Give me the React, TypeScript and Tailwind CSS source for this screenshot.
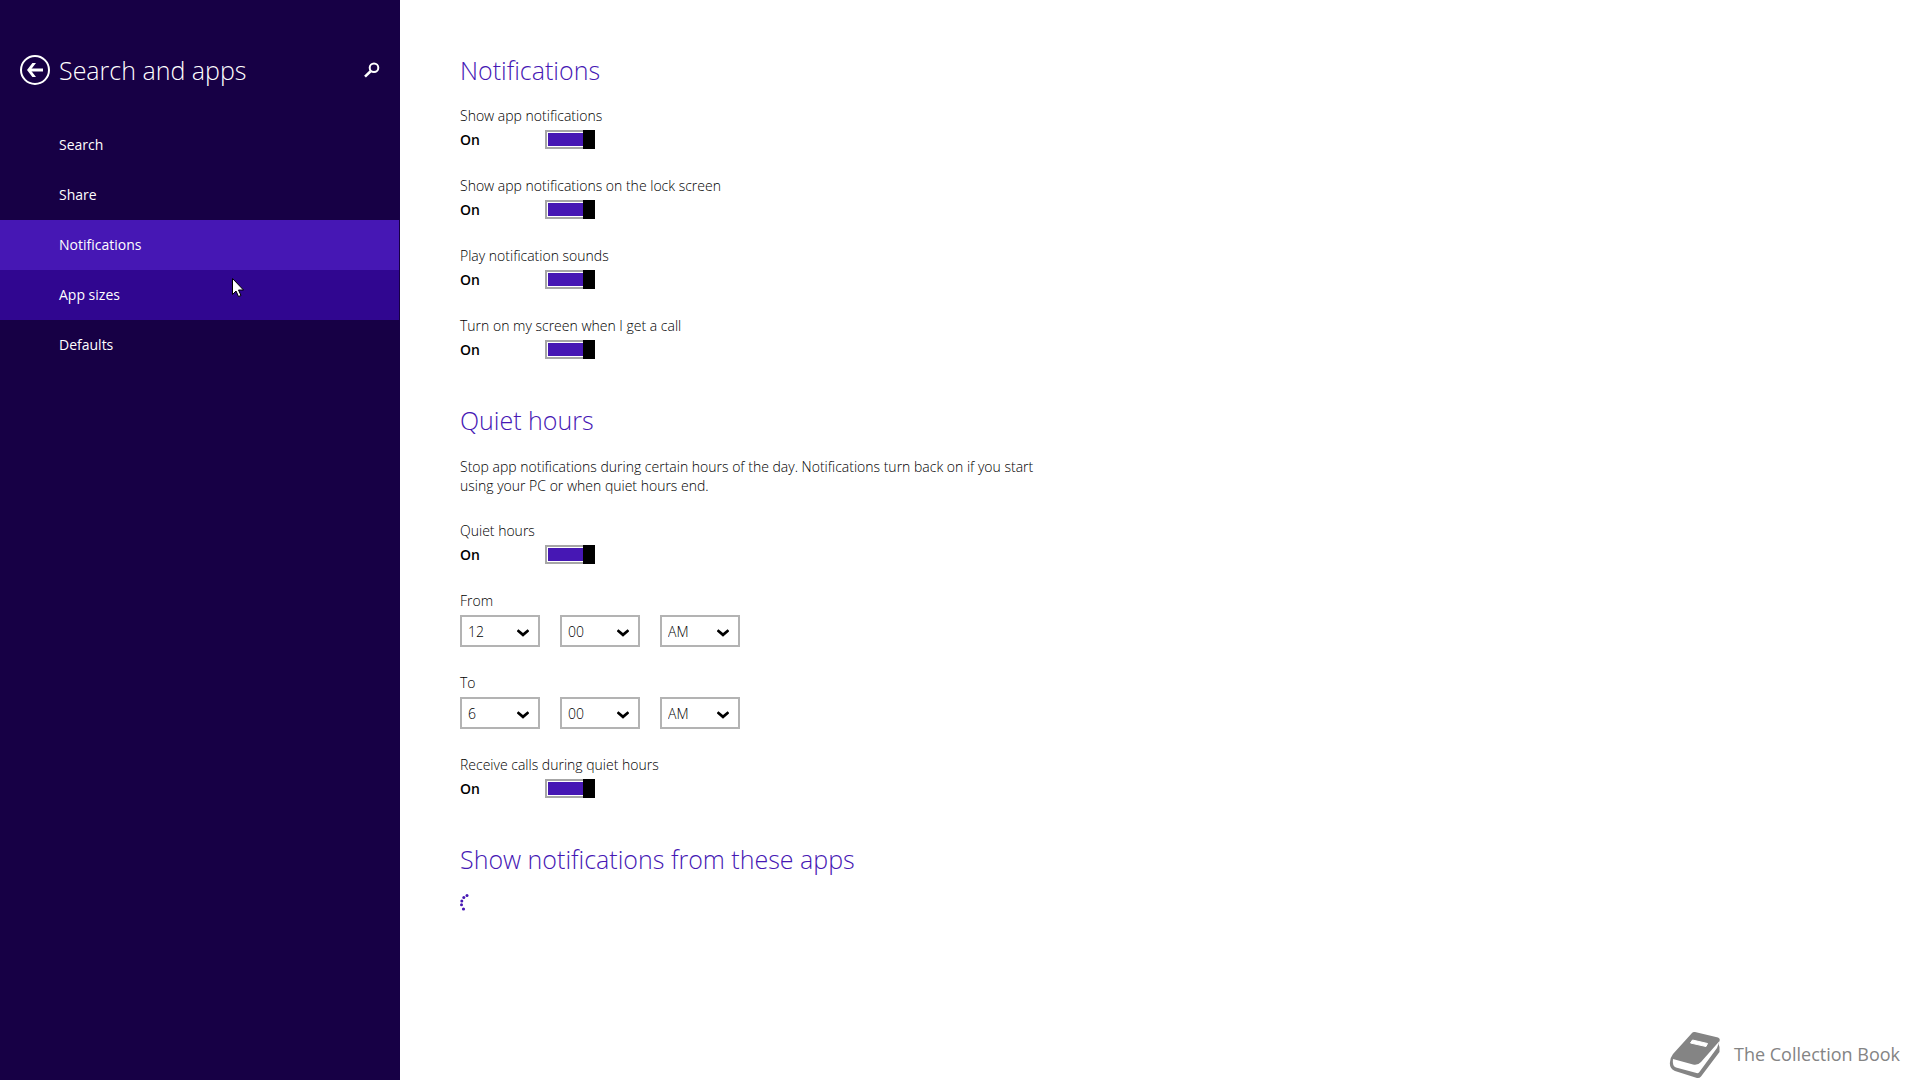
import { useState } from 'react'

const navItems = ['Search', 'Share', 'Notifications', 'App sizes', 'Defaults']

const hours = ['1', '2', '3', '4', '5', '6', '7', '8', '9', '10', '11', '12']
const minutes = ['00', '15', '30', '45']
const periods = ['AM', 'PM']

interface ToggleProps {
  label: string
}

function Toggle({ label }: ToggleProps) {
  const [on, setOn] = useState(true)

  return (
    <label className="relative block w-fit">
      <span className="block text-sm leading-5 font-light">{label}</span>
      <span className="mt-1 flex h-5 items-start">
        <span className="w-[85px] text-sm leading-5 font-semibold">{on ? 'On' : 'Off'}</span>
        <input
          type="checkbox"
          role="switch"
          checked={on}
          onChange={(e) => setOn(e.target.checked)}
          className="sr-only"
        />
        <span
          className={`flex h-[19px] w-[50px] border-2 border-[#a6a6a6] p-px ${
            on ? 'justify-end border-r-0 pr-0' : 'justify-start border-l-0 pl-0'
          }`}
        >
          {on && <span className="flex-1 bg-[#4617b4]" />}
          <span className="-my-[3px] w-3 bg-black" />
        </span>
      </span>
    </label>
  )
}

interface DropdownProps {
  label: string
  value: string
  options: string[]
}

function Dropdown({ label, value, options }: DropdownProps) {
  return (
    <div className="relative w-20">
      <select
        aria-label={label}
        defaultValue={value}
        className="block h-8 w-full appearance-none border-2 border-[#b3b3b3] bg-white pt-0.5 pl-1.5 text-sm font-light"
      >
        {options.map((option) => (
          <option key={option}>{option}</option>
        ))}
      </select>
      <svg
        className="pointer-events-none absolute top-3.5 right-[11px] h-2 w-3"
        viewBox="0 0 12 8"
        fill="none"
        stroke="black"
        strokeWidth={2.8}
      >
        <path d="M0.5 1.2L6 5.8L11.5 1.2" />
      </svg>
    </div>
  )
}

interface TimePickerProps {
  label: string
  hour: string
}

function TimePicker({ label, hour }: TimePickerProps) {
  return (
    <fieldset>
      <legend className="text-sm leading-5 font-light">{label}</legend>
      <div className="mt-1 flex gap-5">
        <Dropdown label={`${label} hour`} value={hour} options={hours} />
        <Dropdown label={`${label} minute`} value="00" options={minutes} />
        <Dropdown label={`${label} period`} value="AM" options={periods} />
      </div>
    </fieldset>
  )
}

function Sidebar() {
  return (
    <aside className="w-[400px] shrink-0 bg-[#170045] text-white">
      <div className="flex h-[120px] items-center px-5 pt-5">
        <button type="button" aria-label="Back">
          <svg className="size-[30px]" viewBox="0 0 30 30" fill="none" stroke="currentColor">
            <circle cx="15" cy="15" r="14" strokeWidth={2} />
            <path d="M23 15H9" strokeWidth={3} />
            <path d="M12.4 8H16L10.6 15L16 22H12.4L7 15Z" fill="currentColor" stroke="none" />
          </svg>
        </button>
        <h1 className="ml-[9px] text-[25px] leading-9 font-light">Search and apps</h1>
        <button type="button" aria-label="Search settings" className="ml-auto">
          <svg className="size-4" viewBox="0 0 16 16" fill="none" stroke="currentColor">
            <circle cx="10" cy="5.8" r="4.3" strokeWidth={2} />
            <path d="M6.6 9.2L1 14.6" strokeWidth={2.6} />
          </svg>
        </button>
      </div>
      <nav>
        {navItems.map((item) => (
          <a
            key={item}
            href="#"
            className={`mr-px flex h-[50px] items-center pl-[59px] text-sm ${
              item === 'Notifications' ? 'bg-[#4617b4]' : item === 'App sizes' ? 'bg-[#300690]' : ''
            }`}
          >
            {item}
          </a>
        ))}
      </nav>
    </aside>
  )
}

export default function App() {
  return (
    <div className="relative flex min-h-screen bg-white font-['Open_Sans','Noto_Sans',sans-serif] text-black">
      <Sidebar />

      <main className="flex-1 px-[60px] pt-[52px]">
        <section>
          <h2 className="text-[25px] leading-9 font-light text-[#4617b4]">Notifications</h2>
          <div className="mt-[18px] space-y-[26px]">
            <Toggle label="Show app notifications" />
            <Toggle label="Show app notifications on the lock screen" />
            <Toggle label="Play notification sounds" />
            <Toggle label="Turn on my screen when I get a call" />
          </div>
        </section>

        <section className="mt-[42px]">
          <h2 className="text-[25px] leading-9 font-light text-[#4617b4]">Quiet hours</h2>
          <p className="mt-[19px] max-w-[590px] text-sm leading-[19px] font-light">
            Stop app notifications during certain hours of the day. Notifications turn back on if you start
            using your PC or when quiet hours end.
          </p>
          <div className="mt-[26px] space-y-[26px]">
            <Toggle label="Quiet hours" />
            <TimePicker label="From" hour="12" />
            <TimePicker label="To" hour="6" />
            <Toggle label="Receive calls during quiet hours" />
          </div>
        </section>

        <section className="mt-[42px]">
          <h2 className="text-[25px] leading-9 font-light text-[#4617b4]">Show notifications from these apps</h2>
          {/* Loading dots */}
          <svg className="mt-[15px] size-5" viewBox="0 0 20 20" fill="#4617b4" role="img" aria-label="Loading">
            <circle cx="7" cy="3.5" r="1.5" />
            <circle cx="3.8" cy="5.5" r="1.5" />
            <circle cx="1.8" cy="9" r="1.5" />
            <circle cx="1.5" cy="12.8" r="1.5" />
            <circle cx="3.5" cy="17" r="1.6" />
          </svg>
        </section>
      </main>

      {/* Watermark */}
      <div className="absolute right-5 bottom-0 flex items-center gap-3.5 text-[#848484]">
        <svg className="size-[52px]" viewBox="0 0 52 52">
          <path
            d="M24 5Q25 3.500 27 4L50 9.500Q52.500 10.500 51.500 13L50.500 16L51.500 19V24L33 48.500Q31.500 50.500 29 50L7 43Q1 40.500 2 34Q2 30 5 26Z"
            fill="currentColor"
          />
          <path d="M5 31L25 36.500Q30 37.500 33 34L51.500 13L49 20L31 44.500Q30 45.500 28.500 45L8 39.500Q4 38 5 31Z" fill="white" />
          <path d="M24.500 12L39.500 15.500L38 18.500L22.500 15Z" fill="white" stroke="white" strokeLinejoin="round" />
        </svg>
        <span className="text-lg">The Collection Book</span>
      </div>

      {/* Mouse pointer */}
      <svg className="pointer-events-none absolute top-[278px] left-[232px] h-[19px] w-3" viewBox="0 0 12 19">
        <path d="M0.5 0.5V16.5L4 13L6.5 18.5L9 17.5L6.5 12H11.5Z" fill="white" stroke="black" />
      </svg>
    </div>
  )
}
